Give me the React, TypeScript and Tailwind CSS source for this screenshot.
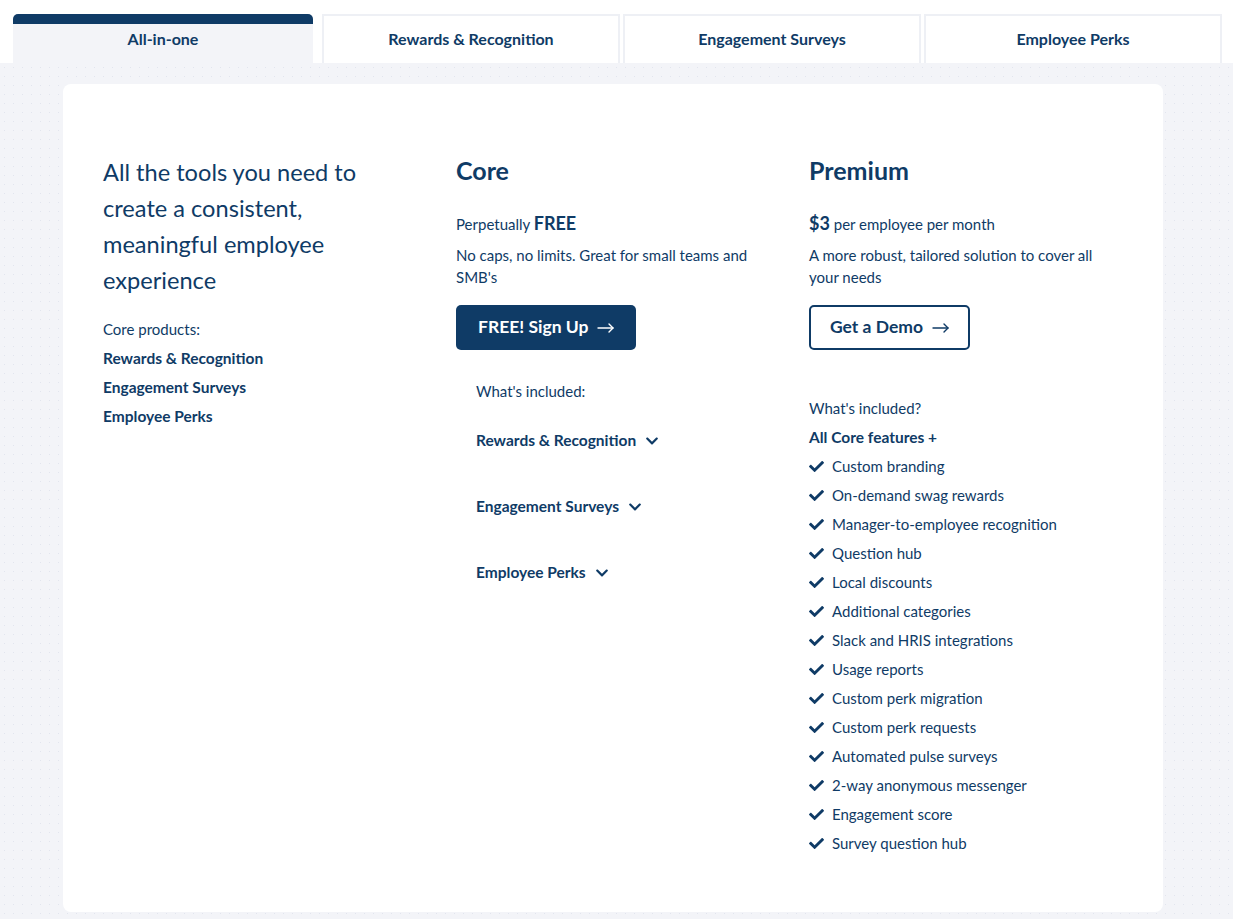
import { FaCheck, FaChevronDown } from "react-icons/fa"

const NAVY = "text-[#0f3b66]"

const premiumFeatures = [
  "Custom branding",
  "On-demand swag rewards",
  "Manager-to-employee recognition",
  "Question hub",
  "Local discounts",
  "Additional categories",
  "Slack and HRIS integrations",
  "Usage reports",
  "Custom perk migration",
  "Custom perk requests",
  "Automated pulse surveys",
  "2-way anonymous messenger",
  "Engagement score",
  "Survey question hub",
]

const coreProducts = ["Rewards & Recognition", "Engagement Surveys", "Employee Perks"]

function ArrowRight() {
  return (
    <svg width="17" height="10" viewBox="0 0 17 10" fill="none" stroke="currentColor" strokeWidth="1.4" strokeLinecap="round" strokeLinejoin="round">
      <path d="M1 5h15" />
      <path d="M12 1l4 4-4 4" />
    </svg>
  )
}

function Tabs() {
  return (
    <div className="flex bg-white pl-[13px] pr-[11px] pt-[14px]">
      <div className="flex h-[49px] w-[300px] flex-col overflow-hidden rounded-t-[5px]">
        <div className="h-[10px] bg-[#0f3b66]" />
        <div className="flex flex-1 items-center justify-center bg-[#f3f4f8] pb-[9px] text-[16px] font-bold text-[#0f3b66]">All-in-one</div>
      </div>
      <div className="ml-[9px] flex flex-1 gap-[3px]">
        {coreProducts.map((tab) => (
          <div
            key={tab}
            className="flex h-[49px] flex-1 items-center justify-center border-2 border-b-0 border-[#eef0f5] bg-white pb-[2px] text-[16px] font-bold text-[#0f3b66]"
          >
            {tab}
          </div>
        ))}
      </div>
    </div>
  )
}

export default function App() {
  return (
    <div className="min-h-[919px] bg-white font-['Lato','Open_Sans',sans-serif]">
      <Tabs />
      <div className="bg-[#f3f4f8] bg-[radial-gradient(#e2e5ee_0.7px,transparent_1px)] bg-[length:9px_9px] pb-[8px] pl-[63px] pt-[21px]">
        <div className={`grid w-[1100px] grid-cols-[353px_353px_1fr] rounded-[8px] bg-white pb-[54px] pl-[40px] pt-[70px] ${NAVY}`}>
          {/* intro */}
          <div className="pr-[40px]">
            <h2 className="text-[23.6px] leading-[36px]">All the tools you need to create a consistent, meaningful employee experience</h2>
            <p className="mt-[17px] text-[15px] leading-[29px]">Core products:</p>
            {coreProducts.map((item) => (
              <p key={item} className="text-[15.5px] font-bold leading-[29px]">
                {item}
              </p>
            ))}
          </div>

          {/* core */}
          <div className="pr-[40px]">
            <h3 className="text-[25px] font-bold leading-[32px]">Core</h3>
            <p className="mt-[22px] text-[15px] leading-[30px]">
              Perpetually <span className="text-[18px] font-bold">FREE</span>
            </p>
            <p className="mt-[5px] text-[15px] leading-[22px]">No caps, no limits. Great for small teams and SMB's</p>
            <button
              type="button"
              className="mt-[17px] flex h-[45px] items-center gap-[9px] rounded-[5px] bg-[#0f3b66] px-[22px] text-[17.5px] font-bold text-white"
            >
              FREE! Sign Up <ArrowRight />
            </button>
            <div className="mt-[29px] pl-[20px]">
              <p className="text-[15px] leading-[24px]">What's included:</p>
              <div className="mt-[26px] flex flex-col gap-[42px]">
                {coreProducts.map((item) => (
                  <div key={item} className="flex h-[24px] items-center gap-[9px] text-[15.5px] font-bold">
                    {item}
                    <FaChevronDown className="h-[14px] w-[14px]" />
                  </div>
                ))}
              </div>
            </div>
          </div>

          {/* premium */}
          <div>
            <h3 className="text-[25px] font-bold leading-[32px]">Premium</h3>
            <p className="mt-[22px] text-[15px] leading-[30px]">
              <span className="text-[18px] font-bold">$3</span> per employee per month
            </p>
            <p className="mt-[5px] w-[300px] text-[15px] leading-[22px]">A more robust, tailored solution to cover all your needs</p>
            <button
              type="button"
              className="mt-[17px] flex h-[45px] items-center gap-[9px] rounded-[5px] border-2 border-[#0f3b66] px-[19px] text-[17.5px] font-bold text-[#0f3b66]"
            >
              Get a Demo <ArrowRight />
            </button>
            <p className="mt-[44px] text-[15px] leading-[29px]">What's included?</p>
            <p className="text-[15.5px] font-bold leading-[29px]">All Core features +</p>
            {premiumFeatures.map((item) => (
              <div key={item} className="flex items-center gap-[8px] text-[15px] leading-[29px]">
                <FaCheck className="h-[15px] w-[15px]" />
                {item}
              </div>
            ))}
          </div>
        </div>
      </div>
    </div>
  )
}
